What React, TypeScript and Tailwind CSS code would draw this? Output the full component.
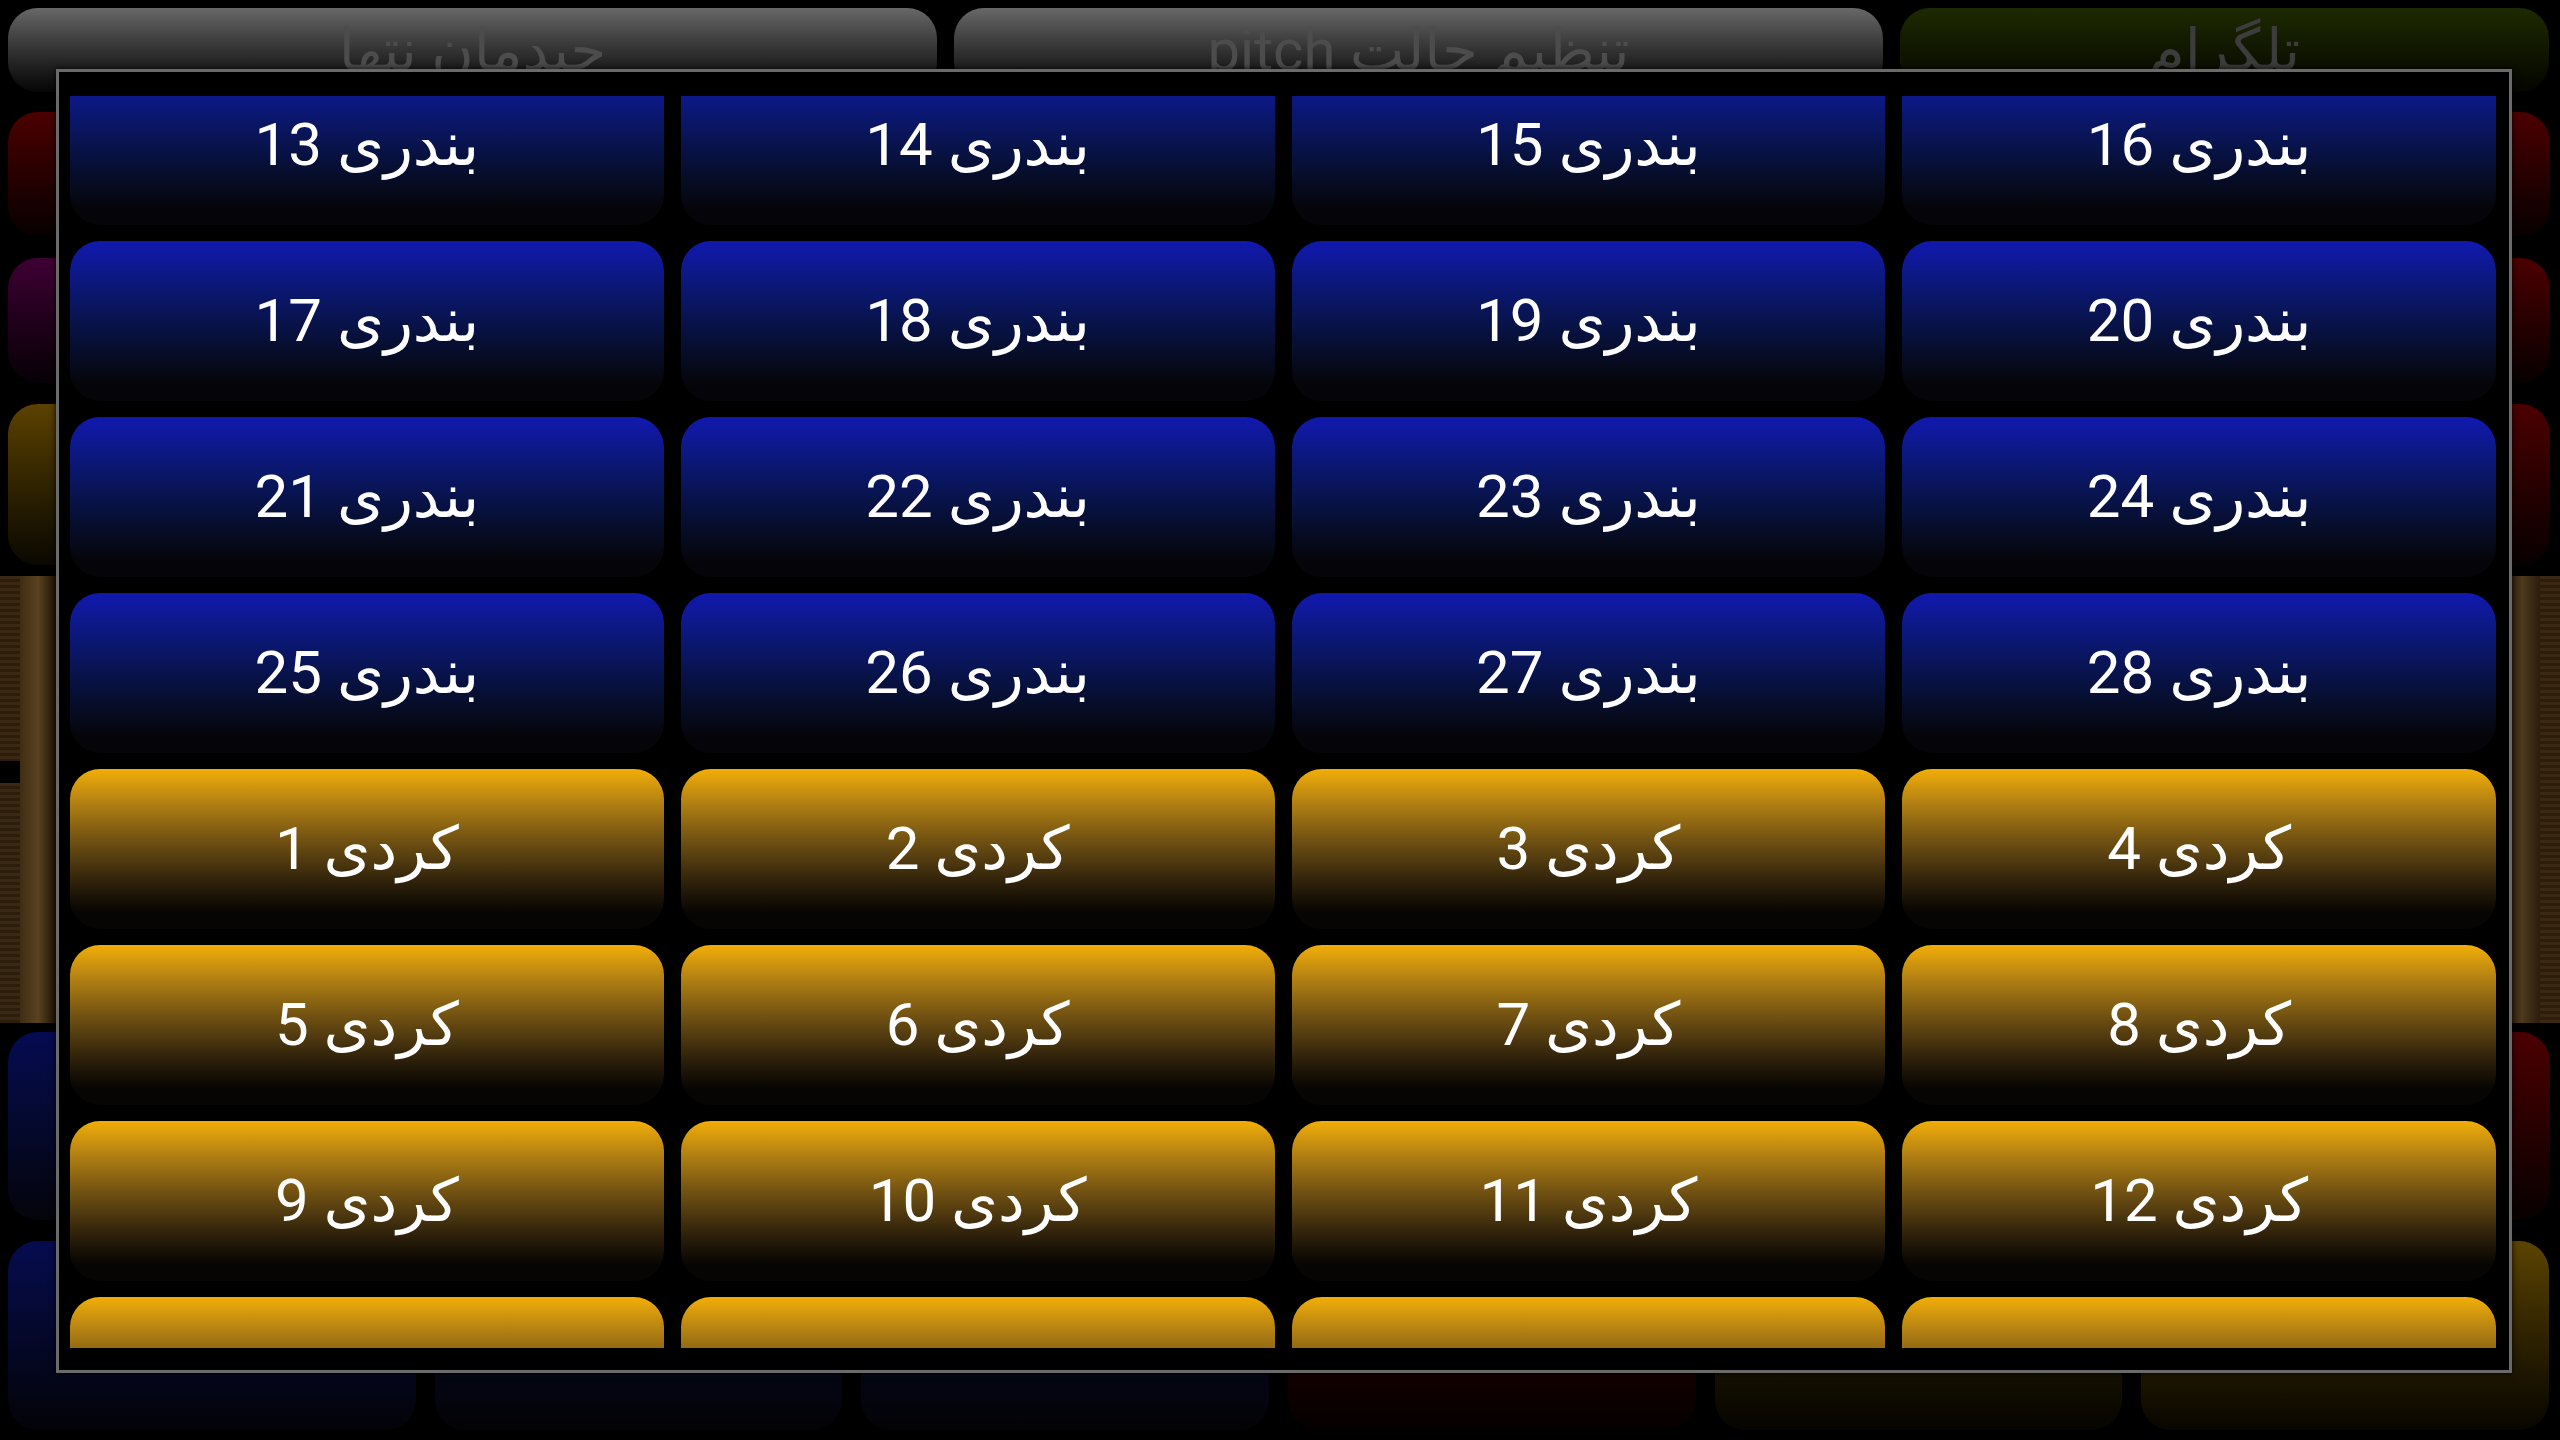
import clsx from 'clsx';

const FONT = "font-['Roboto','DejaVu_Sans',sans-serif]";

const padRows = [
  ...Array.from({ length: 16 }, (_, i) => ({ label: `بندری ${i + 13}`, tone: 'blue' })),
  ...Array.from({ length: 16 }, (_, i) => ({ label: `کردی ${i + 1}`, tone: 'gold' })),
];

const bottomButtons = [
  { label: 'کلاس آنلاین', cls: 'from-[#060b50] to-[#030308]' },
  { label: 'آموزش', cls: 'from-[#070a3c] to-[#030306]' },
  { label: 'ضبط صدا', cls: 'from-[#070a3c] to-[#030306]' },
  { label: 'خروج', cls: 'from-[#3c0000] to-[#050000]' },
  { label: 'تنظیمات', cls: 'from-[#3d3000] to-[#060500]' },
  { label: 'راهنمایی', cls: 'from-[#5c4400] to-[#080600]' },
];

function SideButton({ cls }: { cls: string }) {
  return <div className={clsx('w-[420px] h-full rounded-[30px] bg-linear-to-b', cls)} />;
}

function PadButton({ label, tone }: { label: string; tone: string }) {
  return (
    <div
      dir="rtl"
      className={clsx(
        'rounded-[30px] flex items-center justify-center text-white text-[60px] leading-none bg-linear-to-b',
        tone === 'blue'
          ? 'from-[#1118b0] to-[#050509] to-90%'
          : 'from-[#f2ae06] to-[#070503] to-90%'
      )}
    >
      {label}
    </div>
  );
}

export default function App() {
  return (
    <div className={clsx('relative w-[2560px] h-[1440px] bg-black overflow-hidden', FONT)}>
      {/* Dimmed main screen behind the dialog */}
      <div className="flex flex-col px-[8px] pt-[8px]">
        {/* Top bar */}
        <div className="flex gap-[17px] h-[84px] pr-[3px]">
          <div dir="rtl" className="w-[929px] rounded-[30px] bg-linear-to-b from-[#686868] to-[#060606] flex items-center justify-center text-[58px] text-[#4c4c4c]">
            چیدمان نتها
          </div>
          <div dir="rtl" className="w-[929px] rounded-[30px] bg-linear-to-b from-[#686868] to-[#060606] flex items-center justify-center text-[58px] text-[#4c4c4c]">
            تنظیم حالت pitch
          </div>
          <div dir="rtl" className="flex-1 rounded-[30px] bg-linear-to-b from-[#1e2a00] to-[#050600] flex items-center justify-center text-[58px] text-[#3c3c3c]">
            تلگرام
          </div>
        </div>

        <div className="mt-[20px] h-[124px] flex justify-between pr-[2px]">
          <SideButton cls="from-[#4d0000] to-[#080000]" />
          <SideButton cls="from-[#4d0000] to-[#080000]" />
        </div>
        <div className="mt-[22px] h-[125px] flex justify-between pr-[2px]">
          <SideButton cls="from-[#3e0034] to-[#070006]" />
          <SideButton cls="from-[#4d0000] to-[#080000]" />
        </div>
        <div className="mt-[21px] h-[161px] flex justify-between pr-[2px]">
          <SideButton cls="from-[#5c4200] to-[#0a0800]" />
          <SideButton cls="from-[#4d0000] to-[#080000]" />
        </div>

        {/* Fretboard */}
        <div className="mt-[11px] h-[447px] -mx-[8px] flex">
          <div className="w-[20px] flex flex-col">
            <div className="flex-1 bg-[repeating-linear-gradient(180deg,#3a2812_0px,#3a2812_3px,#2c1d0c_3px,#2c1d0c_6px)]" />
            <div className="h-[22px] bg-black" />
            <div className="flex-[1.3] bg-[repeating-linear-gradient(180deg,#3a2812_0px,#3a2812_3px,#2c1d0c_3px,#2c1d0c_6px)]" />
          </div>
          <div className="w-[36px] bg-linear-to-r from-[#3f2d14] via-[#5a4220] to-[#1e1406]" />
          <div className="flex-1 bg-[#24180a]" />
          <div className="w-[36px] bg-linear-to-r from-[#1e1406] via-[#4e3a1c] to-[#2a1d0c]" />
          <div className="w-[20px] bg-[repeating-linear-gradient(180deg,#3a2812_0px,#3a2812_3px,#2c1d0c_3px,#2c1d0c_6px)]" />
        </div>

        <div className="mt-[9px] h-[188px] flex justify-between pr-[2px]">
          <SideButton cls="from-[#060a52] to-[#04040b]" />
          <SideButton cls="from-[#4d0000] to-[#080000]" />
        </div>

        {/* Bottom bar */}
        <div className="mt-[21px] h-[189px] grid grid-cols-6 gap-[19px] pr-[3px]">
          {bottomButtons.map((b) => (
            <div
              key={b.label}
              dir="rtl"
              className={clsx('rounded-[30px] bg-linear-to-b flex items-center justify-center text-[58px] text-[#262626]', b.cls)}
            >
              {b.label}
            </div>
          ))}
        </div>
      </div>

      {/* Dialog */}
      <div className="absolute left-[56px] top-[69px] w-[2456px] h-[1304px] border-[3px] border-[#6a6a6a] bg-black shadow-[0_0_6px_rgba(0,0,0,0.9)] pt-[24px] pb-[22px] pl-[11px] pr-[13px]">
        <div className="h-full overflow-hidden">
          <div className="-mt-[31px] grid grid-cols-4 auto-rows-[160px] gap-x-[17px] gap-y-[16px]">
            {padRows.map((p) => (
              <PadButton key={p.label} label={p.label} tone={p.tone} />
            ))}
          </div>
        </div>
      </div>
    </div>
  );
}
